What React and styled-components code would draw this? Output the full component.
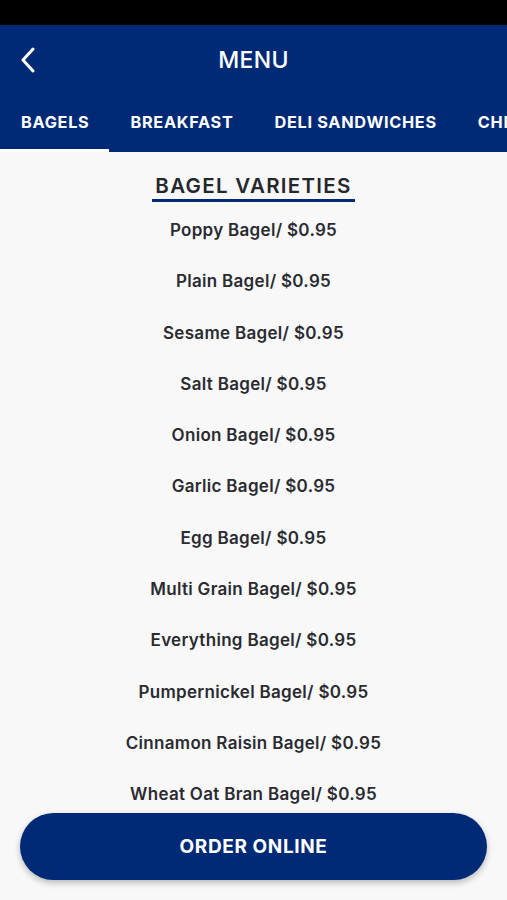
import React from "react";
import styled, { createGlobalStyle } from "styled-components";

const Global = createGlobalStyle`
  html, body { margin: 0; padding: 0; background: #f8f8f9; }
  body { font-family: Inter, "Noto Sans", sans-serif; }
  * { box-sizing: border-box; }
`;

const BLUE = "#012a76";

const Screen = styled.div`
  width: 507px;
  height: 900px;
  display: flex;
  flex-direction: column;
  background: #f8f8f9;
  overflow: hidden;
  position: relative;
`;

const StatusBar = styled.div`
  height: 25px;
  background: #000;
  flex-shrink: 0;
`;

const Header = styled.header`
  background: ${BLUE};
  flex-shrink: 0;
`;

const TitleRow = styled.div`
  height: 70px;
  display: flex;
  align-items: center;
  justify-content: center;
  position: relative;
`;

const BackButton = styled.button`
  position: absolute;
  left: 17px;
  top: 21px;
  width: 22px;
  height: 28px;
  padding: 0;
  border: 0;
  background: none;
  display: flex;
  align-items: center;
  justify-content: center;
`;

const Title = styled.h1`
  margin: 0;
  color: #fff;
  font-size: 23px;
  font-weight: 500;
  letter-spacing: 0.3px;
`;

const Tabs = styled.nav`
  height: 57px;
  display: flex;
  align-items: stretch;
  white-space: nowrap;
  overflow: hidden;
`;

const Tab = styled.div`
  position: relative;
  display: flex;
  align-items: center;
  padding: 0 20px 3px 21px;
  color: #fff;
  font-size: 16.3px;
  font-weight: 700;
  letter-spacing: 0.7px;
  flex-shrink: 0;
  &::after {
    content: "";
    position: absolute;
    left: 0;
    right: 0;
    bottom: 0;
    height: 3px;
    background: ${(p) => (p.$active ? "#fff" : "transparent")};
  }
`;

const Content = styled.main`
  flex: 1;
  display: flex;
  flex-direction: column;
  align-items: center;
  padding-top: 22px;
`;

const Heading = styled.h2`
  margin: 0 0 16px;
  padding: 0 3px 1px;
  color: #25272c;
  font-size: 20.5px;
  font-weight: 600;
  letter-spacing: 1.3px;
  border-bottom: 3px solid ${BLUE};
  line-height: 24px;
`;

const Item = styled.div`
  height: 51.3px;
  color: #2a2b30;
  font-size: 17px;
  font-weight: 600;
  letter-spacing: 0.3px;
  line-height: 24px;
`;

const OrderButton = styled.button`
  position: absolute;
  left: 20px;
  right: 20px;
  bottom: 20px;
  height: 67px;
  border: 0;
  border-radius: 34px;
  background: ${BLUE};
  color: #fff;
  font-family: Inter, "Noto Sans", sans-serif;
  font-size: 19px;
  font-weight: 700;
  letter-spacing: 0.6px;
  box-shadow: 0 3px 6px rgba(0, 0, 0, 0.25);
`;

const tabs = ["BAGELS", "BREAKFAST", "DELI SANDWICHES", "CHI"];
const items = [
  "Poppy Bagel",
  "Plain Bagel",
  "Sesame Bagel",
  "Salt Bagel",
  "Onion Bagel",
  "Garlic Bagel",
  "Egg Bagel",
  "Multi Grain Bagel",
  "Everything Bagel",
  "Pumpernickel Bagel",
  "Cinnamon Raisin Bagel",
  "Wheat Oat Bran Bagel",
];

export default function App() {
  return (
    <>
      <Global />
      <Screen>
        <StatusBar />
        <Header>
          <TitleRow>
            <BackButton aria-label="Back">
              <svg width="16" height="26" viewBox="0 0 16 26" fill="none">
                <path d="M13 2 L3 13 L13 24" stroke="#fff" strokeWidth="3" strokeLinecap="round" strokeLinejoin="round" />
              </svg>
            </BackButton>
            <Title>MENU</Title>
          </TitleRow>
          <Tabs>
            {tabs.map((t, i) => (
              <Tab key={t} $active={i === 0}>{t}</Tab>
            ))}
          </Tabs>
        </Header>
        <Content>
          <Heading>BAGEL VARIETIES</Heading>
          {items.map((it) => (
            <Item key={it}>{it}/ $0.95</Item>
          ))}
        </Content>
        <OrderButton>ORDER ONLINE</OrderButton>
      </Screen>
    </>
  );
}
